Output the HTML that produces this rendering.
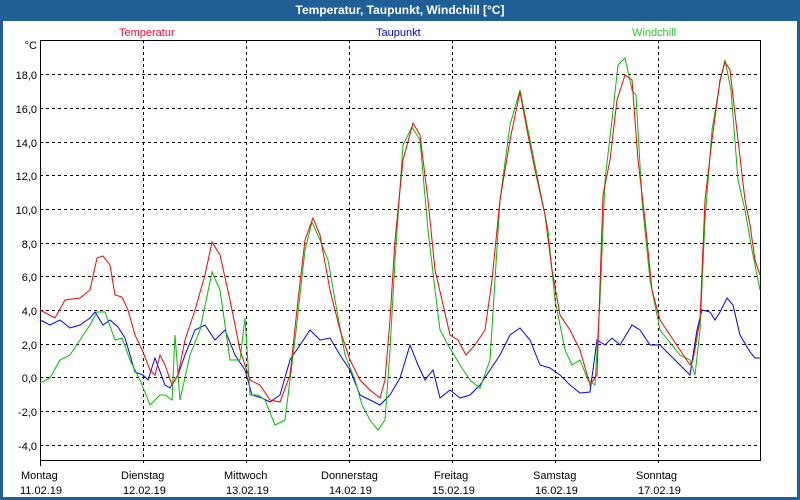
<!DOCTYPE html>
<html><head><meta charset="utf-8"><style>
body{margin:0;width:800px;height:500px;overflow:hidden;background:#1f5f95;font-family:"Liberation Sans",sans-serif}
#t{position:absolute;left:0;top:0;width:800px;height:20px;color:#fff;font-weight:bold;font-size:12px;text-align:center;line-height:20px}
#w{position:absolute;left:3px;top:21px;width:794px;height:476px;background:#fff}
svg{position:absolute;left:0;top:0}
text{font-family:"Liberation Sans",sans-serif;font-size:11px}
</style></head><body>
<div id="t">Temperatur, Taupunkt, Windchill [°C]</div>
<div id="w"></div>
<svg width="800" height="500">
<g stroke="#000" stroke-dasharray="3,3" stroke-width="1">
<line x1="40" x2="760" y1="74.5" y2="74.5"/><line x1="40" x2="760" y1="108.5" y2="108.5"/><line x1="40" x2="760" y1="142.5" y2="142.5"/><line x1="40" x2="760" y1="175.5" y2="175.5"/><line x1="40" x2="760" y1="209.5" y2="209.5"/><line x1="40" x2="760" y1="243.5" y2="243.5"/><line x1="40" x2="760" y1="276.5" y2="276.5"/><line x1="40" x2="760" y1="310.5" y2="310.5"/><line x1="40" x2="760" y1="344.5" y2="344.5"/><line x1="40" x2="760" y1="377.5" y2="377.5"/><line x1="40" x2="760" y1="411.5" y2="411.5"/><line x1="40" x2="760" y1="445.5" y2="445.5"/>
<line x1="143.5" x2="143.5" y1="40" y2="466"/><line x1="246.5" x2="246.5" y1="40" y2="466"/><line x1="349.5" x2="349.5" y1="40" y2="466"/><line x1="452.5" x2="452.5" y1="40" y2="466"/><line x1="555.5" x2="555.5" y1="40" y2="466"/><line x1="658.5" x2="658.5" y1="40" y2="466"/>
</g>
<line x1="40.5" x2="40.5" y1="460" y2="466" stroke="#000"/>
<rect x="40.5" y="40.5" width="720" height="420" fill="none" stroke="#000"/>
<polyline fill="none" stroke="#0000ff" points="40,320 50,325 60,320 70,328 80,325 90,318 95,312 103,325 110,320 118,327 125,338 135,372 143,375 148,380 155,358 165,385 170,388 178,375 185,355 195,330 205,325 215,340 225,330 235,355 245,370 252,395 262,398 270,402 280,395 290,360 300,345 310,330 320,340 330,338 340,355 350,370 360,395 370,400 380,405 390,395 400,378 410,345 418,365 425,380 433,370 440,398 450,390 460,398 470,395 480,385 490,370 500,355 510,335 520,328 530,340 540,365 550,368 560,375 570,385 580,393 590,392 597,340 605,345 612,338 620,345 632,325 640,330 650,345 660,345 670,355 680,365 690,375 697,330 702,310 710,312 715,320 720,312 727,298 733,305 740,335 750,352 755,358 760,358"/>
<polyline fill="none" stroke="#00c000" points="40,383 50,378 60,360 70,355 80,340 90,325 97,312 105,312 115,340 122,338 130,360 140,380 150,405 160,395 165,395 172,400 175,335 180,400 190,355 200,330 212,272 220,290 230,360 240,360 245,318 250,395 258,395 265,400 275,425 285,420 295,340 305,250 312,222 320,240 328,260 335,300 345,355 355,380 362,405 370,420 378,430 385,420 390,350 395,260 403,145 412,127 420,140 428,230 435,290 440,330 448,345 460,365 470,380 480,388 490,360 500,200 510,125 520,90 528,130 540,190 548,230 555,300 565,350 572,365 580,360 588,380 595,385 600,300 605,180 612,120 618,65 625,58 632,90 636,95 642,200 650,280 660,330 672,345 680,355 690,360 695,375 700,330 705,220 712,130 720,82 725,60 731,90 738,180 745,210 752,250 760,290"/>
<polyline fill="none" stroke="#ff0000" points="40,310 55,318 65,300 80,298 90,290 97,258 103,256 110,265 115,295 122,297 128,310 135,335 143,352 150,370 155,375 160,355 165,365 172,385 178,375 185,340 195,310 205,275 212,242 220,255 230,300 240,350 250,380 260,385 270,400 280,402 290,375 298,300 305,240 313,218 320,235 330,290 340,330 350,360 360,380 370,390 380,398 385,380 390,320 395,240 403,160 413,123 420,135 428,200 435,270 442,300 450,335 458,340 466,355 475,345 485,330 492,280 500,200 510,140 520,92 528,135 535,170 545,215 552,270 560,315 570,330 580,350 590,385 597,375 603,195 610,160 617,100 625,75 632,80 638,160 645,220 652,290 660,320 670,335 680,350 690,365 693,360 700,320 705,200 712,140 720,80 725,62 730,70 738,140 745,200 750,225 755,260 760,275"/>
<g text-anchor="end" fill="#000">
<text x="37" y="49">°C</text>
<text x="37" y="79">18,0</text><text x="37" y="113">16,0</text><text x="37" y="147">14,0</text><text x="37" y="180">12,0</text><text x="37" y="214">10,0</text><text x="37" y="248">8,0</text><text x="37" y="281">6,0</text><text x="37" y="315">4,0</text><text x="37" y="349">2,0</text><text x="37" y="382">0,0</text><text x="37" y="416">-2,0</text><text x="37" y="450">-4,0</text>
</g>
<text x="119" y="36" fill="#ff0040">Temperatur</text>
<text x="376" y="36" fill="#0000ff">Taupunkt</text>
<text x="632" y="36" fill="#20d020">Windchill</text>
<g fill="#000">
<text x="21" y="479">Montag</text><text x="20" y="494">11.02.19</text>
<text x="121" y="479">Dienstag</text><text x="123" y="494">12.02.19</text>
<text x="224" y="479">Mittwoch</text><text x="226" y="494">13.02.19</text>
<text x="321" y="479">Donnerstag</text><text x="329" y="494">14.02.19</text>
<text x="434" y="479">Freitag</text><text x="432" y="494">15.02.19</text>
<text x="533" y="479">Samstag</text><text x="535" y="494">16.02.19</text>
<text x="636" y="479">Sonntag</text><text x="638" y="494">17.02.19</text>
</g>
</svg>
</body></html>
